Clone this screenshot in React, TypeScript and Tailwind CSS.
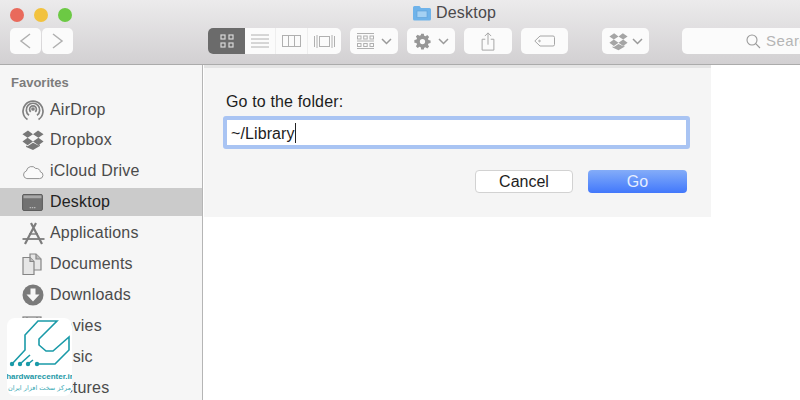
import type { ReactNode } from "react";

const Chevron = () => (
  <svg width="11" height="7" viewBox="0 0 11 7" fill="none" stroke="#9a9a9a" strokeWidth="1.5">
    <path d="M1 1l4.5 4.5L10 1" />
  </svg>
);

const DropboxGlyph = ({ size = 20, color = "#8a8a8a" }: { size?: number; color?: string }) => (
  <svg width={size} height={size} viewBox="0 0 24 24" fill={color}>
    <path d="M6.5 1.5L0.5 5.6l5.6 4L12 5.8zM17.5 1.5L12 5.8l5.9 3.8 5.6-4zM0.5 13.5l5.6 4.1L12 13.7 6.1 9.6zM17.9 9.6L12 13.7l5.9 3.9 5.6-4.1zM12 15l-5.9 3.9-1.6-1v1.6L12 23l7.5-4.5v-1.6l-1.6 1z" />
  </svg>
);

const ToolButton = ({ className, children }: { className: string; children: ReactNode }) => (
  <div className={`h-[26px] bg-[#fbfbfb] rounded-[5px] flex items-center justify-center shrink-0 ${className}`}>
    {children}
  </div>
);

const icons: Record<string, ReactNode> = {
  AirDrop: (
    <svg width="22" height="23" viewBox="0 0 22 23" fill="none" stroke="#808080" strokeWidth="1.7">
      <path d="M5.5 21.5a10 10 0 1 1 11 0" />
      <path d="M7 17.300a6.700 6.700 0 1 1 8 0" />
      <path d="M8.700 13.800a3.400 3.400 0 1 1 4.600 0" />
      <circle cx="11" cy="11" r="1" fill="#808080" />
    </svg>
  ),
  Dropbox: <DropboxGlyph size={22} color="#777" />,
  "iCloud Drive": (
    <svg width="22" height="17" viewBox="0 0 23 18" fill="#fafafa" stroke="#8c8c8c" strokeWidth="1">
      <path d="M5 16.500h13.500a3.600 3.600 0 0 0 .8-7.100 4.200 4.200 0 0 0-4.900-3.600 5.600 5.600 0 0 0-9.900 2.700A4.100 4.100 0 0 0 5 16.500z" />
    </svg>
  ),
  Desktop: (
    <svg width="21" height="17" viewBox="0 0 22 18">
      <rect x="0.500" y="0.500" width="21" height="17" rx="1.500" fill="#717171" stroke="#585858" />
      <rect x="1.500" y="1.500" width="19" height="3" fill="#a8a8a8" />
      <path d="M8 14.500h1.500M10.300 14.500h1.500M12.600 14.500h1.500" stroke="#cfcfcf" strokeWidth="1" />
    </svg>
  ),
  Applications: (
    <svg width="23" height="23" viewBox="0 0 23 23" fill="none" stroke="#7c7c7c" strokeWidth="2.200">
      <path d="M14 1L3 22M9 1l11 21" />
      <path d="M0.500 17h22" strokeWidth="1.800" />
      <path d="M7 12h9" strokeWidth="1.400" />
    </svg>
  ),
  Documents: (
    <svg width="20" height="22" viewBox="0 0 20 22" fill="#e6e6e6" stroke="#858585" strokeWidth="1.200">
      <path d="M8 1h6l5 5v11H8z" />
      <path d="M14 1v5h5" fill="#bbb" />
      <path d="M1 4.500h7l4 4v13H1z" />
      <path d="M8 4.500v4h4" fill="#bbb" />
    </svg>
  ),
  Downloads: (
    <svg width="22" height="22" viewBox="0 0 22 22">
      <circle cx="11" cy="11" r="10.500" fill="#7a7a7a" />
      <path d="M8.500 4.500h5v6h4L11 17.500 4.500 10.500h4z" fill="#f6f6f6" />
    </svg>
  ),
  Movies: (
    <svg width="20" height="20" viewBox="0 0 20 20" fill="#e8e8e8" stroke="#808080" strokeWidth="1.200">
      <rect x="1" y="1" width="18" height="18" />
      <path d="M5 1v18M15 1v18" />
    </svg>
  ),
  Music: null,
  Pictures: null,
};

const favorites = [
  "AirDrop",
  "Dropbox",
  "iCloud Drive",
  "Desktop",
  "Applications",
  "Documents",
  "Downloads",
  "Movies",
  "Music",
  "Pictures",
];

const Toolbar = () => (
  <header className="h-[65px] shrink-0 bg-gradient-to-b from-[#ecebec] to-[#d2d0d2] border-b border-[#ababab] flex flex-col">
    {/* Title row */}
    <div className="h-[28px] shrink-0 flex items-center relative">
      <div className="flex gap-[10px] pl-[10px] pt-px">
        <span className="w-[14px] h-[14px] rounded-full bg-[#e96a5c]" />
        <span className="w-[14px] h-[14px] rounded-full bg-[#f2c23e]" />
        <span className="w-[14px] h-[14px] rounded-full bg-[#6cc944]" />
      </div>
      <div className="absolute left-[413px] top-[5px] flex items-center gap-[5px]">
        <svg width="18" height="16" viewBox="0 0 18 16">
          <path d="M0 2.500A1.500 1.500 0 0 1 1.500 1h5L8 3h8.500A1.500 1.500 0 0 1 18 4.500V14a1.500 1.500 0 0 1-1.500 1.500h-15A1.500 1.500 0 0 1 0 14z" fill="#6fb3ea" />
          <rect x="4" y="6" width="10" height="6.500" fill="#a5d1f3" stroke="#5c9fd8" strokeWidth="0.600" />
        </svg>
        <span className="text-[16px] leading-none text-[#4b494b] tracking-[0.2px]">Desktop</span>
      </div>
    </div>

    {/* Buttons row */}
    <div className="flex items-center pl-[10px] overflow-hidden">
      <div className="flex gap-[1px] mr-[135px]">
        <ToolButton className="w-[31px]">
          <svg width="13" height="16" viewBox="0 0 13 16" fill="none" stroke="#b0b0b0" strokeWidth="1.500">
            <path d="M11 1L2 8l9 7" />
          </svg>
        </ToolButton>
        <ToolButton className="w-[31px]">
          <svg width="13" height="16" viewBox="0 0 13 16" fill="none" stroke="#b0b0b0" strokeWidth="1.500">
            <path d="M2 1l9 7-9 7" />
          </svg>
        </ToolButton>
      </div>

      <div className="flex h-[26px] w-[133px] bg-[#fbfbfb] rounded-[5px] overflow-hidden mr-[9px] shrink-0">
        <div className="w-[37px] bg-[#6b6b6b] flex items-center justify-center">
          <svg width="14" height="14" viewBox="0 0 14 14" fill="none" stroke="#d8d8d8" strokeWidth="1.200">
            <rect x="1" y="1" width="4" height="4" />
            <rect x="9" y="1" width="4" height="4" />
            <rect x="1" y="9" width="4" height="4" />
            <rect x="9" y="9" width="4" height="4" />
          </svg>
        </div>
        <div className="w-[31px] border-r border-[#eeeeee] flex items-center justify-center">
          <svg width="18" height="14" viewBox="0 0 18 14" stroke="#b0b0b0" strokeWidth="1">
            <path d="M0 1h18M0 5h18M0 9h18M0 13h18" />
          </svg>
        </div>
        <div className="w-[32px] border-r border-[#eeeeee] flex items-center justify-center">
          <svg width="19" height="12" viewBox="0 0 19 12" fill="none" stroke="#b0b0b0" strokeWidth="1">
            <rect x="0.500" y="0.500" width="18" height="11" />
            <path d="M6.500 0v12M12.500 0v12" />
          </svg>
        </div>
        <div className="flex-1 flex items-center justify-center">
          <svg width="21" height="13" viewBox="0 0 21 13" fill="none" stroke="#b0b0b0" strokeWidth="1">
            <rect x="5.500" y="1.500" width="10" height="10" />
            <path d="M0.500 1v11M3 0v13M18 0v13M20.500 1v11" />
          </svg>
        </div>
      </div>

      <ToolButton className="w-[48px] gap-[7px] mr-[9px]">
        <svg width="17" height="16" viewBox="0 0 17 16" fill="none" stroke="#b0b0b0" strokeWidth="1">
          <path d="M0 0.500h17M0 8h17M0 15.500h17" />
          <rect x="0.500" y="3" width="3.500" height="3" />
          <rect x="6.700" y="3" width="3.500" height="3" />
          <rect x="13" y="3" width="3.500" height="3" />
          <rect x="0.500" y="10.500" width="3.500" height="3" />
          <rect x="6.700" y="10.500" width="3.500" height="3" />
          <rect x="13" y="10.500" width="3.500" height="3" />
        </svg>
        <Chevron />
      </ToolButton>

      <ToolButton className="w-[48px] gap-[7px] mr-[9px]">
        <svg width="17" height="17" viewBox="0 0 24 24" fill="#979797">
          <path fillRule="evenodd" d="M10 1h4l.6 3.200 2 .8 2.700-1.800 2.800 2.800-1.800 2.700.8 2 3.200.6v4l-3.200.6-.8 2 1.800 2.700-2.800 2.800-2.700-1.800-2 .8L14 25h-4l-.6-3.200-2-.8-2.700 1.800-2.800-2.800 1.800-2.700-.8-2L-.3 14.700v-4L2.900 10l.8-2L1.900 5.300l2.800-2.800 2.700 1.800 2-.8zM12 9a4 4 0 1 0 0 8 4 4 0 0 0 0-8z" transform="translate(0.800 0) scale(0.930)" />
        </svg>
        <Chevron />
      </ToolButton>

      <ToolButton className="w-[48px] mr-[9px]">
        <svg width="14" height="19" viewBox="0 0 15 21" fill="none" stroke="#a6a6a6" strokeWidth="1.100">
          <path d="M4.500 8H1v12h13V8h-3.500M7.500 14V1M4 4.500L7.500 1 11 4.500" />
        </svg>
      </ToolButton>

      <ToolButton className="w-[47px] mr-[34px]">
        <svg width="21" height="12" viewBox="0 0 21 12" fill="none" stroke="#a6a6a6" strokeWidth="1">
          <path d="M6 1h13a1.500 1.500 0 0 1 1.500 1.500v7A1.500 1.500 0 0 1 19 11H6L0.800 6z" />
          <circle cx="5.500" cy="6" r="0.800" />
        </svg>
      </ToolButton>

      <ToolButton className="w-[47px] gap-[4px] mr-[33px]">
        <DropboxGlyph size={19} color="#a5a5a5" />
        <Chevron />
      </ToolButton>

      <ToolButton className="w-[130px] justify-start pl-[64px] gap-[5px] rounded-r-none">
        <svg width="15" height="15" viewBox="0 0 15 15" fill="none" stroke="#9a9a9a" strokeWidth="1.100" className="shrink-0">
          <circle cx="6" cy="6" r="5" />
          <path d="M9.700 9.700L14 14" />
        </svg>
        <span className="text-[15px] text-[#b5b5b5] tracking-[0.4px]">Search</span>
      </ToolButton>
    </div>
  </header>
);

const Sidebar = () => (
  <aside className="w-[203px] shrink-0 bg-[#f6f6f6] border-r border-[#b5b5b5] pt-[9px] overflow-hidden">
    <p className="pl-[11px] h-[17px] leading-[17px] text-[13px] font-bold text-[#7c7c7c] mb-[4.500px]">Favorites</p>
    <ul className="flex flex-col gap-[2.900px]">
      {favorites.map((name) => (
        <li
          key={name}
          className={`h-[28px] shrink-0 flex items-center ${name === "Desktop" ? "bg-[#cbcbcb]" : ""}`}
        >
          <span className="w-[50px] pl-[22px] flex items-center shrink-0">{icons[name]}</span>
          <span className={`text-[16px] tracking-[0.2px] ${name === "Desktop" ? "text-[#222222]" : "text-[#4b4b4b]"}`}>
            {name}
          </span>
        </li>
      ))}
    </ul>
  </aside>
);

const GoToFolder = () => (
  <section className="w-[507px] h-[152px] ml-[1px] bg-[#f5f5f5] border-t-[3px] border-[#e4e4e4] px-[19px] pt-[24px]">
    <p className="text-[16px] leading-[20px] text-[#1d1d1d] pl-[3px] tracking-[0.15px]">Go to the folder:</p>
    <div className="mt-[4px] h-[33px] w-[467px] border-[4px] border-[#a9c4f3] rounded-[3px] bg-white flex items-center pl-[4px]">
      <span className="text-[16px] tracking-[0.1px] text-[#1d1d1d] pt-[2px]">~/Library</span>
      <span className="w-[1.500px] h-[20px] bg-[#222222] mt-[1px]" />
    </div>
    <div className="flex justify-end gap-[15px] mt-[21px] pr-[5px]">
      <button className="w-[98px] h-[23px] bg-white border border-[#d2d2d2] rounded-[4px] text-[16px] leading-none text-[#1d1d1d]">
        Cancel
      </button>
      <button className="w-[99px] h-[23px] bg-gradient-to-b from-[#84acf8] to-[#4277fb] rounded-[4px] text-[16px] leading-none text-[#e6eeff]">
        Go
      </button>
    </div>
  </section>
);

const Badge = () => (
  <div className="absolute left-[7px] top-[318px] w-[65px] h-[78px] bg-white rounded-[8px] flex flex-col items-center overflow-hidden">
    <svg width="65" height="52" viewBox="0 0 65 52" fill="none" stroke="#1a9aa8" strokeWidth="1.600" className="shrink-0">
      <path d="M5 46l13-14V17L31 3h19L32 21v6l7 6h7l16-14v13L48 46H30" />
      <path d="M13 46l10-9M21 46l5-4" />
      <g fill="#1a9aa8" stroke="none">
        <circle cx="5" cy="46" r="2.200" />
        <circle cx="13" cy="46" r="2.200" />
        <circle cx="21" cy="46" r="2.200" />
        <circle cx="30" cy="46" r="2.200" />
      </g>
    </svg>
    <span className="mt-[1px] text-[8px] leading-[12px] font-bold text-[#1c98a6] font-['Liberation_Sans',sans-serif] whitespace-nowrap">
      hardwarecenter.ir
    </span>
    <span dir="rtl" className="text-[6.500px] leading-[10px] text-[#3aa9b5] font-['DejaVu_Sans',sans-serif] whitespace-nowrap">
      مرکز سخت افزار ایران
    </span>
  </div>
);

export default function App() {
  return (
    <div className="relative w-[800px] h-[400px] overflow-hidden flex flex-col bg-white font-['Liberation_Sans',Arial,sans-serif]">
      <Toolbar />
      <div className="flex flex-1 min-h-0">
        <Sidebar />
        <GoToFolder />
      </div>
      <Badge />
    </div>
  );
}
